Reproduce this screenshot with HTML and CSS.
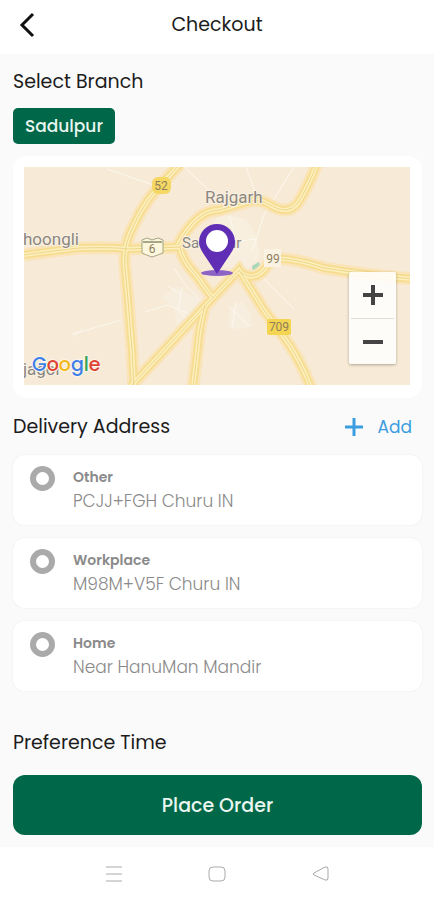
FILE: index.html
```html
<!DOCTYPE html>
<html lang="en">
<head>
    <meta charset="UTF-8">
    <meta name="viewport" content="width=device-width, initial-scale=1.0">
    <title>Checkout</title>
    <link rel="stylesheet" href="styles.css">
</head>
<body>
    <header class="topbar">
        <button class="back-btn" type="button" aria-label="Back">
            <svg width="16" height="26" viewBox="0 0 16 26"><path d="M14 2 L3 13 L14 24"/></svg>
        </button>
        <h1>Checkout</h1>
    </header>

    <main class="content">
        <section class="branch">
            <h2>Select Branch</h2>
            <button class="branch-btn" type="button">Sadulpur</button>
        </section>

        <div class="map-card">
            <div class="map">
                <svg class="map-view" viewBox="0 0 386 218" preserveAspectRatio="xMidYMid slice">
                    <rect width="386" height="218" fill="#f7ead6"/>

                    <!-- town area -->
                    <g fill="#f8f1e3" opacity="0.7">
                        <path d="M196 46 L222 52 L232 68 L236 90 L222 104 L200 100 L180 82 L186 60Z"/>
                        <path d="M138 130 L152 119 L162 126 L178 132 L165 146 L153 158 L150 141Z"/>
                        <path d="M206 142 L218 134 L226 146 L229 158 L216 163 L204 160Z"/>
                    </g>
                    <g class="streets">
                        <path d="M83 2 L135 20 M160 0 L188 26 M222 0 L236 38 M270 0 L240 48 L228 84"/>
                        <path d="M48 167 L60 164 L97 153 M49 170 L58 162"/>
                        <path d="M150 101 L162 119 L174 130 M121 145 L144 138 L168 148 L184 137"/>
                        <path d="M158 120 L154 143 L163 153 M144 119 L158 128 M206 50 L214 84"/>
                        <path d="M198 76 L232 72 M240 112 L270 142 M205 139 L226 160 M212 135 L208 160"/>
                    </g>
                    <path d="M228 99 L235 95 L237 102 L229 105Z" fill="#a9d8b9"/>

                    <defs>
                        <g id="roads">
                            <path d="M0 88 Q34 83 56 81 Q90 80 104 82 L156 80"/>
                            <path d="M156 -3 L145 9 Q121 32 109 60 Q99 79 101 100 L104 133 L108 183 L110 220"/>
                            <path d="M107 219 L183 137 L215 103 L240 143 L257 166 Q276 191 287 221"/>
                            <path d="M154 78 Q172 43 196 43 L226 34 Q237 32 246 38 Q264 49 274 36 Q284 20 293 -3"/>
                            <path d="M156 80 Q158 93 172 108 L188 130"/>
                            <path d="M181 138 Q175 162 174 178 L169 220"/>
                            <path d="M216 105 Q229 115 240 103 L248 92 Q267 90 300 101 Q342 108 388 112"/>
                        </g>
                    </defs>
                    <use href="#roads" class="road-edge"/>
                    <use href="#roads" class="road-fill"/>
                    <use href="#roads" class="road-lane"/>
                    <use href="#roads" class="road-line"/>

                    <rect x="128" y="10" width="19" height="17" rx="6" fill="#f5d763"/>
                    <text class="road-no" x="137" y="23">52</text>
                    <path d="M118 73 L123 71 L128 73 L134 71 L139 73 V86 Q134 88 128 90 Q122 88 118 86Z" fill="#fbf6dc" stroke="#a5a786"/>
                    <path d="M119 75 H138" stroke="#a5a786" stroke-width="2"/>
                    <text class="road-no" x="128" y="86">6</text>
                    <rect x="240" y="82" width="17" height="18" fill="#faf3e4"/>
                    <text class="road-no" x="249" y="96">99</text>
                    <rect x="243" y="152" width="24" height="16" rx="2" fill="#f3d552"/>
                    <text class="road-no" x="255" y="164">709</text>

                    <g class="places">
                        <text x="181" y="36">Rajgarh</text>
                        <text x="-1" y="78">hoongli</text>
                        <text x="158" y="81" class="town">Sadulpur</text>
                        <text x="-1" y="208">jagor</text>
                    </g>
                    <text x="8" y="204" class="google"><tspan fill="#3f7fe8">G</tspan><tspan fill="#df4336">o</tspan><tspan fill="#f2b916">o</tspan><tspan fill="#3f7fe8">g</tspan><tspan fill="#34a353">l</tspan><tspan fill="#df4336">e</tspan></text>

                    <ellipse cx="193" cy="106" rx="16" ry="3" fill="#8d62c5"/>
                    <path d="M193 107 L179 86 Q175 80 175 75 A18 18 0 0 1 211 75 Q211 80 207 86Z" fill="#5f2eb5"/>
                    <circle cx="193" cy="74" r="11" fill="#fff"/>
                </svg>
                <div class="zoom">
                    <button type="button" aria-label="Zoom in">
                        <svg width="22" height="22" viewBox="0 0 22 22"><path d="M1 11H21M11 1V21"/></svg>
                    </button>
                    <button type="button" aria-label="Zoom out">
                        <svg width="22" height="22" viewBox="0 0 22 22"><path d="M1 11H21"/></svg>
                    </button>
                </div>
            </div>
        </div>

        <section class="delivery">
            <div class="section-head">
                <h2>Delivery Address</h2>
                <button class="add-btn" type="button">
                    <svg width="18" height="18" viewBox="0 0 18 18"><path d="M0 9H18M9 0V18"/></svg>
                    Add
                </button>
            </div>
            <div class="address-list">
                <label class="address">
                    <input type="radio" name="address">
                    <span class="address-text"><b>Other</b><span>PCJJ+FGH Churu IN</span></span>
                </label>
                <label class="address">
                    <input type="radio" name="address">
                    <span class="address-text"><b>Workplace</b><span>M98M+V5F Churu IN</span></span>
                </label>
                <label class="address">
                    <input type="radio" name="address">
                    <span class="address-text"><b>Home</b><span>Near HanuMan Mandir</span></span>
                </label>
            </div>
        </section>

        <h2 class="preference">Preference Time</h2>
        <button class="order-btn" type="button">Place Order</button>
    </main>

    <nav class="navbar">
        <button type="button" aria-label="Recent apps">
            <svg width="18" height="18" viewBox="0 0 18 18"><path d="M1 2H17M1 9H17M1 16H17"/></svg>
        </button>
        <button type="button" aria-label="Home screen">
            <svg width="18" height="18" viewBox="0 0 18 18"><rect x="1" y="2" width="16" height="14" rx="4"/></svg>
        </button>
        <button type="button" aria-label="Go back">
            <svg width="18" height="18" viewBox="0 0 18 18"><path d="M3 8 L14 2 Q17 1 17 4 V13 Q17 16 14 15 L3 10 Q1 9 3 8Z"/></svg>
        </button>
    </nav>
</body>
</html>
```
FILE: styles.css
```css
* {
    box-sizing: border-box;
}
body {
    margin: 0;
    min-height: 100vh;
    display: flex;
    flex-direction: column;
    font-family: 'Poppins', 'Inter', sans-serif;
    background-color: #fff;
    color: #1c1c1c;
}
button {
    padding: 0;
    border: none;
    background: none;
    font-family: inherit;
    cursor: pointer;
}
svg {
    display: block;
    fill: none;
}
h1, h2 {
    margin: 0;
    font-size: 19px;
    font-weight: 400;
    line-height: 28px;
}
.topbar {
    display: grid;
    grid-template-columns: 32px 1fr 32px;
    align-items: center;
    height: 54px;
    padding: 0 12px 4px;
}
.topbar h1 {
    text-align: center;
}
.back-btn {
    padding-left: 7px;
}
.back-btn svg {
    stroke: #111;
    stroke-width: 3;
}
.content {
    flex: 1;
    display: flex;
    flex-direction: column;
    padding: 14px 12px 12px 13px;
    background-color: #fafafa;
}
.branch-btn {
    margin: 12px 0;
    height: 36px;
    padding: 0 12px;
    border-radius: 5px;
    background-color: #006848;
    color: #eaf6f0;
    font-size: 17px;
    font-weight: 500;
}
.map-card {
    padding: 11px 12px 13px 11px;
    border-radius: 14px;
    background-color: #fff;
}
.map {
    position: relative;
}
.map-view {
    width: 100%;
    height: 218px;
}
.streets {
    stroke: #fcf8f0;
    stroke-width: 1;
}
.road-edge {
    stroke: #fae4b9;
    stroke-width: 13;
}
.road-fill {
    stroke: #f7dd92;
    stroke-width: 8;
}
.road-lane {
    stroke: #fbf0be;
    stroke-width: 4;
}
.road-line {
    stroke: #f0d488;
    stroke-width: 1;
}
.road-no {
    font-family: 'Roboto', sans-serif;
    font-size: 12px;
    text-anchor: middle;
    fill: #8f7f5c;
}
.places {
    font-family: 'Roboto', sans-serif;
    font-size: 17px;
    fill: #8c877e;
    stroke: #f9f1e4;
    stroke-width: 2;
    paint-order: stroke;
}
.places .town {
    font-size: 15px;
}
.google {
    font-family: 'Poppins', sans-serif;
    font-size: 19px;
    font-weight: 500;
    stroke: #fbf5ea;
    stroke-width: 2;
    paint-order: stroke;
}
.zoom {
    position: absolute;
    right: 14px;
    bottom: 21px;
    width: 47px;
    padding: 0 2px;
    border-radius: 2px;
    background-color: rgba(255, 255, 255, 0.85);
    box-shadow: 0 1px 3px rgba(0, 0, 0, 0.3);
}
.zoom button {
    display: flex;
    align-items: center;
    justify-content: center;
    width: 100%;
    height: 46px;
}
.zoom button + button {
    border-top: 1px solid #e2ded8;
}
.zoom svg {
    stroke: #444;
    stroke-width: 4;
}
.section-head {
    display: flex;
    justify-content: space-between;
    align-items: center;
    padding: 15px 10px 14px 0;
}
.add-btn {
    display: flex;
    align-items: center;
    gap: 15px;
    color: #3b9de0;
    font-size: 17px;
    line-height: 28px;
}
.add-btn svg {
    stroke: #3b9de0;
    stroke-width: 3;
}
.address-list {
    display: flex;
    flex-direction: column;
    gap: 13px;
}
.address {
    display: flex;
    align-items: flex-start;
    gap: 18px;
    min-height: 70px;
    padding: 11px 17px;
    border-radius: 12px;
    background-color: #fff;
    box-shadow: 0 0 2px rgba(0, 0, 0, 0.08);
}
.address input {
    appearance: none;
    flex: none;
    width: 25px;
    height: 25px;
    margin: 0;
    border: 6px solid #aaa;
    border-radius: 50%;
}
.address-text {
    display: flex;
    flex-direction: column;
    color: #8a8a8a;
    font-size: 17px;
    font-weight: 300;
    line-height: 24px;
}
.address-text b {
    font-size: 14px;
    font-weight: 600;
    line-height: 23px;
}
.preference {
    margin: 38px 0 18px;
}
.order-btn {
    height: 60px;
    border-radius: 12px;
    background-color: #006848;
    color: #eaf6f0;
    font-size: 19px;
    font-weight: 500;
}
.navbar {
    display: grid;
    grid-template-columns: repeat(3, 1fr);
    height: 54px;
    padding: 0 62px;
}
.navbar button {
    display: flex;
    align-items: center;
    justify-content: center;
}
.navbar svg {
    stroke: #aaa;
    stroke-width: 1;
}
```
